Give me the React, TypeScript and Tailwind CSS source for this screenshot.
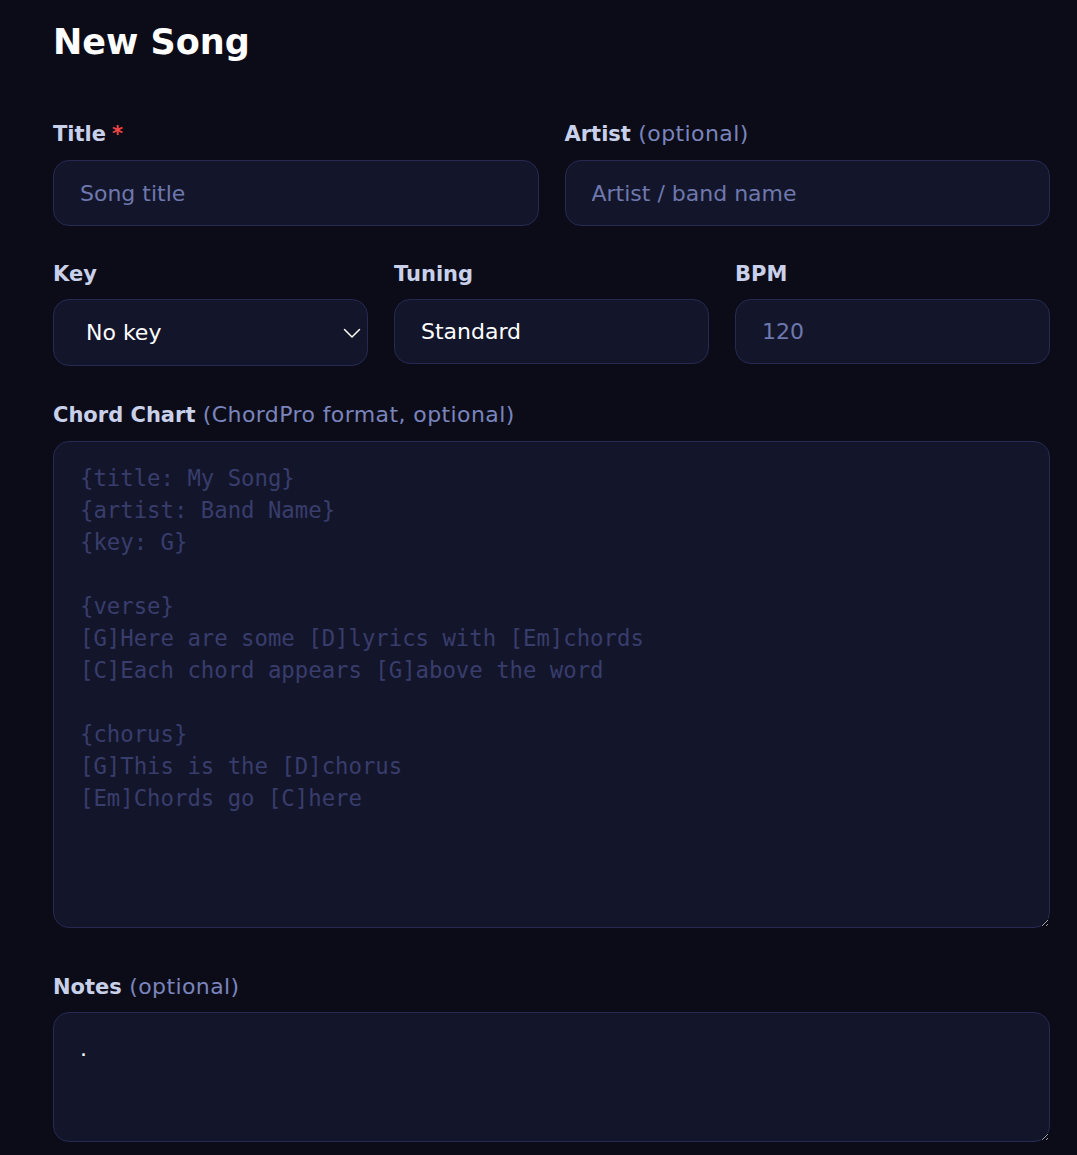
import React from "react";

const sans = { fontFamily: '"DejaVu Sans", "Open Sans", sans-serif' };

function Label({ text, extra, required, mb = "mb-[11px]" }: { text: string; extra?: string; required?: boolean; mb?: string }) {
  return (
    <label className={"block text-[21px] leading-[30px] font-semibold text-[#c9d1ea] " + mb}>
      {text}
      {required && <span className="text-[#ef4444] ml-[6px]">*</span>}
      {extra && <span className="font-normal text-[22px] tracking-[0.4px] text-[#7a84bd]"> {extra}</span>}
    </label>
  );
}

const inputCls =
  "w-full h-[66px] rounded-[16px] bg-[#13152b] border border-[#262a52] px-[26px] text-[22px] text-white placeholder:text-[#6e78ad] outline-none";

export default function App() {
  const chord = `{title: My Song}
{artist: Band Name}
{key: G}

{verse}
[G]Here are some [D]lyrics with [Em]chords
[C]Each chord appears [G]above the word

{chorus}
[G]This is the [D]chorus
[Em]Chords go [C]here`;
  return (
    <div className="min-h-[1155px] bg-[#0c0c18] pl-[53px] pr-[27px] pt-[16px]" style={sans}>
      <h1 className="text-[35px] leading-[52px] font-bold text-white mb-[51px]">New Song</h1>

      <div className="grid grid-cols-2 gap-[26px] mb-[33px]">
        <div>
          <Label text="Title" required />
          <input className={inputCls} placeholder="Song title" style={sans} />
        </div>
        <div>
          <Label text="Artist" extra="(optional)" />
          <input className={inputCls} placeholder="Artist / band name" style={sans} />
        </div>
      </div>

      <div className="grid grid-cols-3 gap-[26px] mb-[34px]">
        <div>
          <Label text="Key" mb="mb-[10px]" />
          <div className="relative">
            <div className="w-full h-[67px] rounded-[16px] bg-[#13152b] border border-[#262a52] pl-[32px] flex items-center text-[22px] text-white">
              No key
            </div>
            <svg
              className="absolute right-[7px] top-[25px]"
              width="18"
              height="18"
              viewBox="0 0 18 18"
              fill="none"
              stroke="white"
              strokeWidth="1.5"
              strokeLinecap="round"
              strokeLinejoin="round"
            >
              <path d="M1.5 5.5l7.5 7.5 7.5-7.5" />
            </svg>
          </div>
        </div>
        <div>
          <Label text="Tuning" mb="mb-[10px]" />
          <input className={inputCls + " !h-[65px]"} defaultValue="Standard" style={sans} />
        </div>
        <div>
          <Label text="BPM" mb="mb-[10px]" />
          <input className={inputCls + " !h-[65px]"} placeholder="120" style={sans} />
        </div>
      </div>

      <div className="mb-[44px]">
        <Label text="Chord Chart" extra="(ChordPro format, optional)" />
        <textarea
          className="block w-full h-[487px] rounded-[16px] bg-[#13152b] border border-[#262a52] px-[26px] py-[20px] text-[22.3px] leading-[32px] text-white placeholder:text-[#383d6b] outline-none resize-y"
          placeholder={chord}
          style={{ fontFamily: '"DejaVu Sans Mono", "Liberation Mono", monospace' }}
        />
      </div>

      <div>
        <Label text="Notes" extra="(optional)" mb="mb-[10px]" />
        <textarea
          className="block w-full h-[130px] rounded-[16px] bg-[#13152b] border border-[#262a52] px-[26px] py-[20px] text-[22px] leading-[32px] text-white placeholder:text-[#6e78ad] outline-none resize-y"
          defaultValue="."
          style={sans}
        />
      </div>
    </div>
  );
}
